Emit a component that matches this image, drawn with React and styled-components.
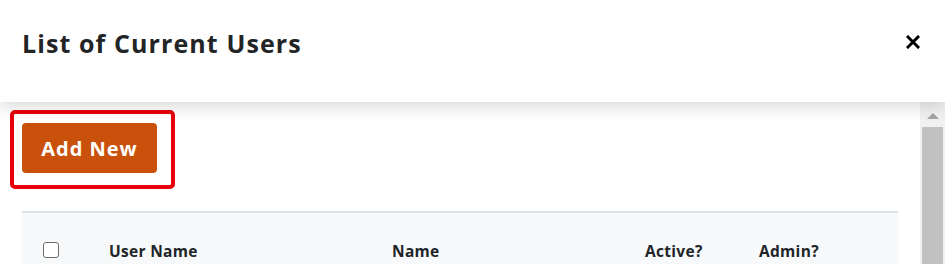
import styled, { createGlobalStyle } from 'styled-components';

const GlobalStyle = createGlobalStyle`
  html, body {
    margin: 0;
    padding: 0;
    background: #ffffff;
    overflow: hidden;
  }
  body {
    font-family: "Open Sans", "Liberation Sans", sans-serif;
    color: #212529;
  }
`;

const Modal = styled.div`
  width: 945px;
  height: 264px;
  display: flex;
  flex-direction: column;
  background: #fff;
  border-radius: 6px 6px 0 0;
  overflow: hidden;
`;

const Header = styled.div`
  position: relative;
  z-index: 2;
  height: 102px;
  flex: none;
  display: flex;
  align-items: center;
  justify-content: space-between;
  padding: 0 22px 0 22px;
  box-sizing: border-box;
  background: #fff;
  box-shadow: 0 4px 16px rgba(0, 0, 0, 0.16);
`;

const Title = styled.h2`
  margin: 0 0 16px 0;
  font-size: 25px;
  font-weight: 700;
  color: #222426;
  letter-spacing: 1.1px;
`;

const Close = styled.button`
  border: none;
  background: none;
  padding: 0;
  margin: 0 2px 18px 0;
  width: 16px;
  height: 16px;
  display: flex;
  align-items: center;
  justify-content: center;
  cursor: pointer;
`;

const Body = styled.div`
  flex: 1;
  display: flex;
  min-height: 0;
`;

const Content = styled.div`
  flex: 1;
  padding: 8px 22px 0 10px;
  display: flex;
  flex-direction: column;
  align-items: flex-start;
`;

const Highlight = styled.div`
  border: 4px solid #e8000b;
  border-radius: 5px;
  padding: 9px 14px 12px 8px;
`;

const Button = styled.button`
  background-color: #c9510c;
  color: #fff;
  border: none;
  border-radius: 4px;
  width: 135px;
  height: 50px;
  font-family: "Open Sans", "Liberation Sans", sans-serif;
  font-size: 20px;
  font-weight: 700;
  letter-spacing: 1px;
  cursor: pointer;
`;

const Table = styled.div`
  margin: 22px 0 0 12px;
  width: 876px;
  border-top: 2px solid #dee2e6;
  background: #f8f9fa;
  flex: 1;
`;

const HeadRow = styled.div`
  display: grid;
  grid-template-columns: 66px 283px 253px 114px 1fr;
  align-items: center;
  padding: 16px 0 0 21px;
  height: 60px;
  box-sizing: border-box;
`;

const HeadCell = styled.div`
  font-size: 15.5px;
  font-weight: 700;
  letter-spacing: 0.3px;
  color: #212529;
`;

const Check = styled.span`
  display: block;
  width: 14px;
  height: 14px;
  border: 1.5px solid #6b6b6b;
  border-radius: 3px;
  background: #fff;
  margin-top: -3px;
`;

const Scrollbar = styled.div`
  width: 25px;
  flex: none;
  background: #f1f1f1;
  display: flex;
  flex-direction: column;
  align-items: center;
`;

const Arrow = styled.div`
  margin-top: 11px;
  width: 0;
  height: 0;
  border-left: 6px solid transparent;
  border-right: 6px solid transparent;
  border-bottom: 6px solid #a3a3a3;
`;

const Thumb = styled.div`
  margin-top: 8px;
  width: 21px;
  flex: 1;
  background: #c1c1c1;
`;

export default function App() {
  return (
    <>
      <GlobalStyle />
      <Modal>
        <Header>
          <Title>List of Current Users</Title>
          <Close aria-label="Close">
            <svg width="14" height="14" viewBox="0 0 14 14">
              <path d="M2 2 L12 12 M12 2 L2 12" stroke="#000" strokeWidth="3" strokeLinecap="square" />
            </svg>
          </Close>
        </Header>
        <Body>
          <Content>
            <Highlight>
              <Button>Add New</Button>
            </Highlight>
            <Table>
              <HeadRow>
                <Check />
                <HeadCell>User Name</HeadCell>
                <HeadCell>Name</HeadCell>
                <HeadCell>Active?</HeadCell>
                <HeadCell>Admin?</HeadCell>
              </HeadRow>
            </Table>
          </Content>
          <Scrollbar>
            <Arrow />
            <Thumb />
          </Scrollbar>
        </Body>
      </Modal>
    </>
  );
}
